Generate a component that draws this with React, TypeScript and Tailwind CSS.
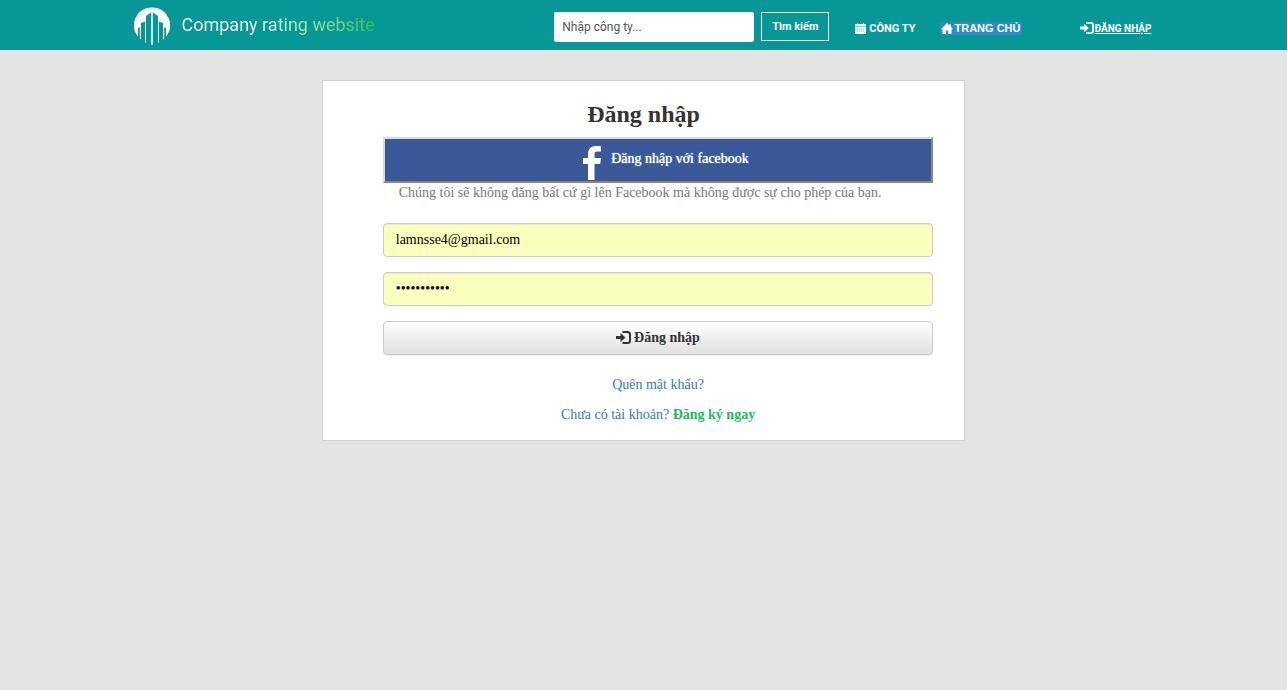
import type { ReactNode } from "react";

function Logo() {
  return (
    <svg width="36" height="38" viewBox="0 0 36 38" aria-hidden="true" className="mt-0.5 block shrink-0">
      <path fill="#fff" d="M18 0.500a17.800 17.800 0 0 1 14.500 28.500q-3 4.500-8 6.500l-6.500 1.500-6.500-1.500q-5-2-8-6.500A17.800 17.800 0 0 1 18 .5z" />
      <g fill="#079797">
        <path d="M12 9l5-3.500V38h-5zM19 5.500L24 9v29h-5z" />
        <path d="M7 16l4-1.500V36H7zM25 14.500l4 1.500v20h-4z" />
        <path d="M4 21l1.800-.8V34H4zM30.200 20.200l1.800.8v13h-1.800z" />
      </g>
      <path fill="#c5e9e9" d="M17 6l1-.7 1 .7v32h-2z" />
    </svg>
  );
}

function LogInIcon({ className }: { className: string }) {
  return (
    <svg viewBox="0 0 15 13" aria-hidden="true" className={className} fill="currentColor">
      <path d="M6.500 0h5A3.500 3.500 0 0 1 15 3.500v6a3.500 3.500 0 0 1-3.500 3.500h-5v-2h5a1.500 1.500 0 0 0 1.500-1.500v-6A1.500 1.500 0 0 0 11.500 2h-5z" />
      <path d="M0 5h4.500V2L9.500 6.500l-5 4.500V8H0z" />
    </svg>
  );
}

function CalendarIcon() {
  return (
    <svg viewBox="0 0 11 11" aria-hidden="true" className="h-[11px] w-[11px]" fill="currentColor">
      <path d="M0 1h2V0h1v1h5V0h1v1h2v2.500H0z" />
      <path d="M0 4h11v7H0z" />
      <path d="M2 6h7M2 8h7" stroke="#079797" strokeWidth=".6" strokeDasharray="1.200 .7" />
    </svg>
  );
}

function HomeIcon() {
  return (
    <svg viewBox="0 0 12 11" aria-hidden="true" className="h-[11px] w-3" fill="currentColor">
      <path d="M6 0l2.500 2.500V1H10v3l2 2.200h-1.500V11H7.200V7.500H4.800V11H1.500V6.200H0z" />
    </svg>
  );
}

function FacebookIcon() {
  return (
    <svg viewBox="0 0 18 34" aria-hidden="true" className="h-[34px] w-[18px]" fill="#fff">
      <path d="M5 34V18H0v-6h5V8.500C5 3 8 0 13 0h5v5.500h-3.500c-2.500 0-3 1-3 3V12H18l-.8 6h-5.700v16z" />
    </svg>
  );
}

function NavLink({ className, children }: { className: string; children: ReactNode }) {
  return (
    <a href="#" className={`flex items-center leading-[13px] font-bold whitespace-nowrap text-white ${className}`}>
      {children}
    </a>
  );
}

const fieldClass =
  "block h-[34px] w-full rounded border border-[#ccc] bg-[#faffbd] px-3 text-sm text-black shadow-[inset_0_1px_1px_rgba(0,0,0,0.075)]";

export default function App() {
  return (
    <div className="min-h-screen bg-[#e4e4e4] font-['Liberation_Serif',serif] text-sm text-[#333]">
      <header className="bg-[#079797] font-[Roboto,sans-serif]">
        <div className="mx-auto flex h-[50px] max-w-[1020px] items-center pr-0.5">
          <a href="#" className="mr-auto flex items-center gap-3">
            <Logo />
            <span className="bg-linear-to-r from-white from-30% to-[#28c440] bg-clip-text text-lg text-transparent">
              Company rating website
            </span>
          </a>
          <form className="mt-1 mr-[26px] flex items-start gap-[7px]" onSubmit={(e) => e.preventDefault()}>
            <input
              type="text"
              aria-label="Nhập công ty"
              placeholder="Nhập công ty..."
              className="h-[30px] w-[200px] rounded-xs bg-white px-2 text-xs placeholder:text-[#555]"
            />
            <button type="submit" className="h-[29px] w-[68px] border border-white text-[11px] font-bold whitespace-nowrap text-white">
              Tìm kiếm
            </button>
          </form>
          <nav className="mt-1.5 flex items-center">
            <NavLink className="mr-6 gap-[3px] text-[11px]">
              <CalendarIcon />
              CÔNG TY
            </NavLink>
            <NavLink className="mr-[58px] gap-0.5 rounded-xs bg-[#2a8bc8] px-px font-['Liberation_Sans',sans-serif] text-[11px]">
              <HomeIcon />
              TRANG CHỦ
            </NavLink>
            <NavLink className="text-[10px] underline">
              <LogInIcon className="mr-px h-3 w-3.5" />
              ĐĂNG NHẬP
            </NavLink>
          </nav>
        </div>
      </header>

      <main className="mx-auto mt-[30px] w-1/2 border border-[#d0d0d0] bg-white pt-5 pr-[31px] pb-[15px] pl-[60px]">
        <h1 className="mb-2.5 -ml-[29px] text-center text-2xl leading-[26px] font-bold">Đăng nhập</h1>
        <button
          type="button"
          className="flex h-[46px] w-full justify-center gap-2.5 border-2 border-t-[#dadada] border-r-[#888] border-b-[#888] border-l-[#dadada] bg-[#3b5998] pt-[7px] pl-4 text-white"
        >
          <FacebookIcon />
          <span className="mt-[3px] leading-5 [text-shadow:0_0_1px_#fff]">Đăng nhập với facebook</span>
        </button>
        <p className="px-4 leading-5 text-[#777]">
          Chúng tôi sẽ không đăng bất cứ gì lên Facebook mà không được sự cho phép của bạn.
        </p>
        <form className="mt-5 flex flex-col gap-[15px]" onSubmit={(e) => e.preventDefault()}>
          <input type="email" aria-label="Email" defaultValue="lamnsse4@gmail.com" className={fieldClass} />
          <input type="password" aria-label="Mật khẩu" defaultValue="matkhau1234" className={fieldClass} />
          <button
            type="submit"
            className="flex h-[34px] items-center justify-center gap-[3px] rounded border border-[#ccc] bg-linear-to-b from-white to-[#e0e0e0] pb-px font-bold shadow-[0_1px_1px_rgba(0,0,0,0.075)]"
          >
            <LogInIcon className="h-[13px] w-[15px]" />
            Đăng nhập
          </button>
        </form>
        <p className="mt-5 text-center leading-5">
          <a href="#" className="text-[#337ab7]">Quên mật khẩu?</a>
        </p>
        <p className="mt-2.5 text-center leading-5">
          <a href="#" className="text-[#337ab7]">
            Chưa có tài khoản? <strong className="text-[#1abc60]">Đăng ký ngay</strong>
          </a>
        </p>
      </main>
    </div>
  );
}
